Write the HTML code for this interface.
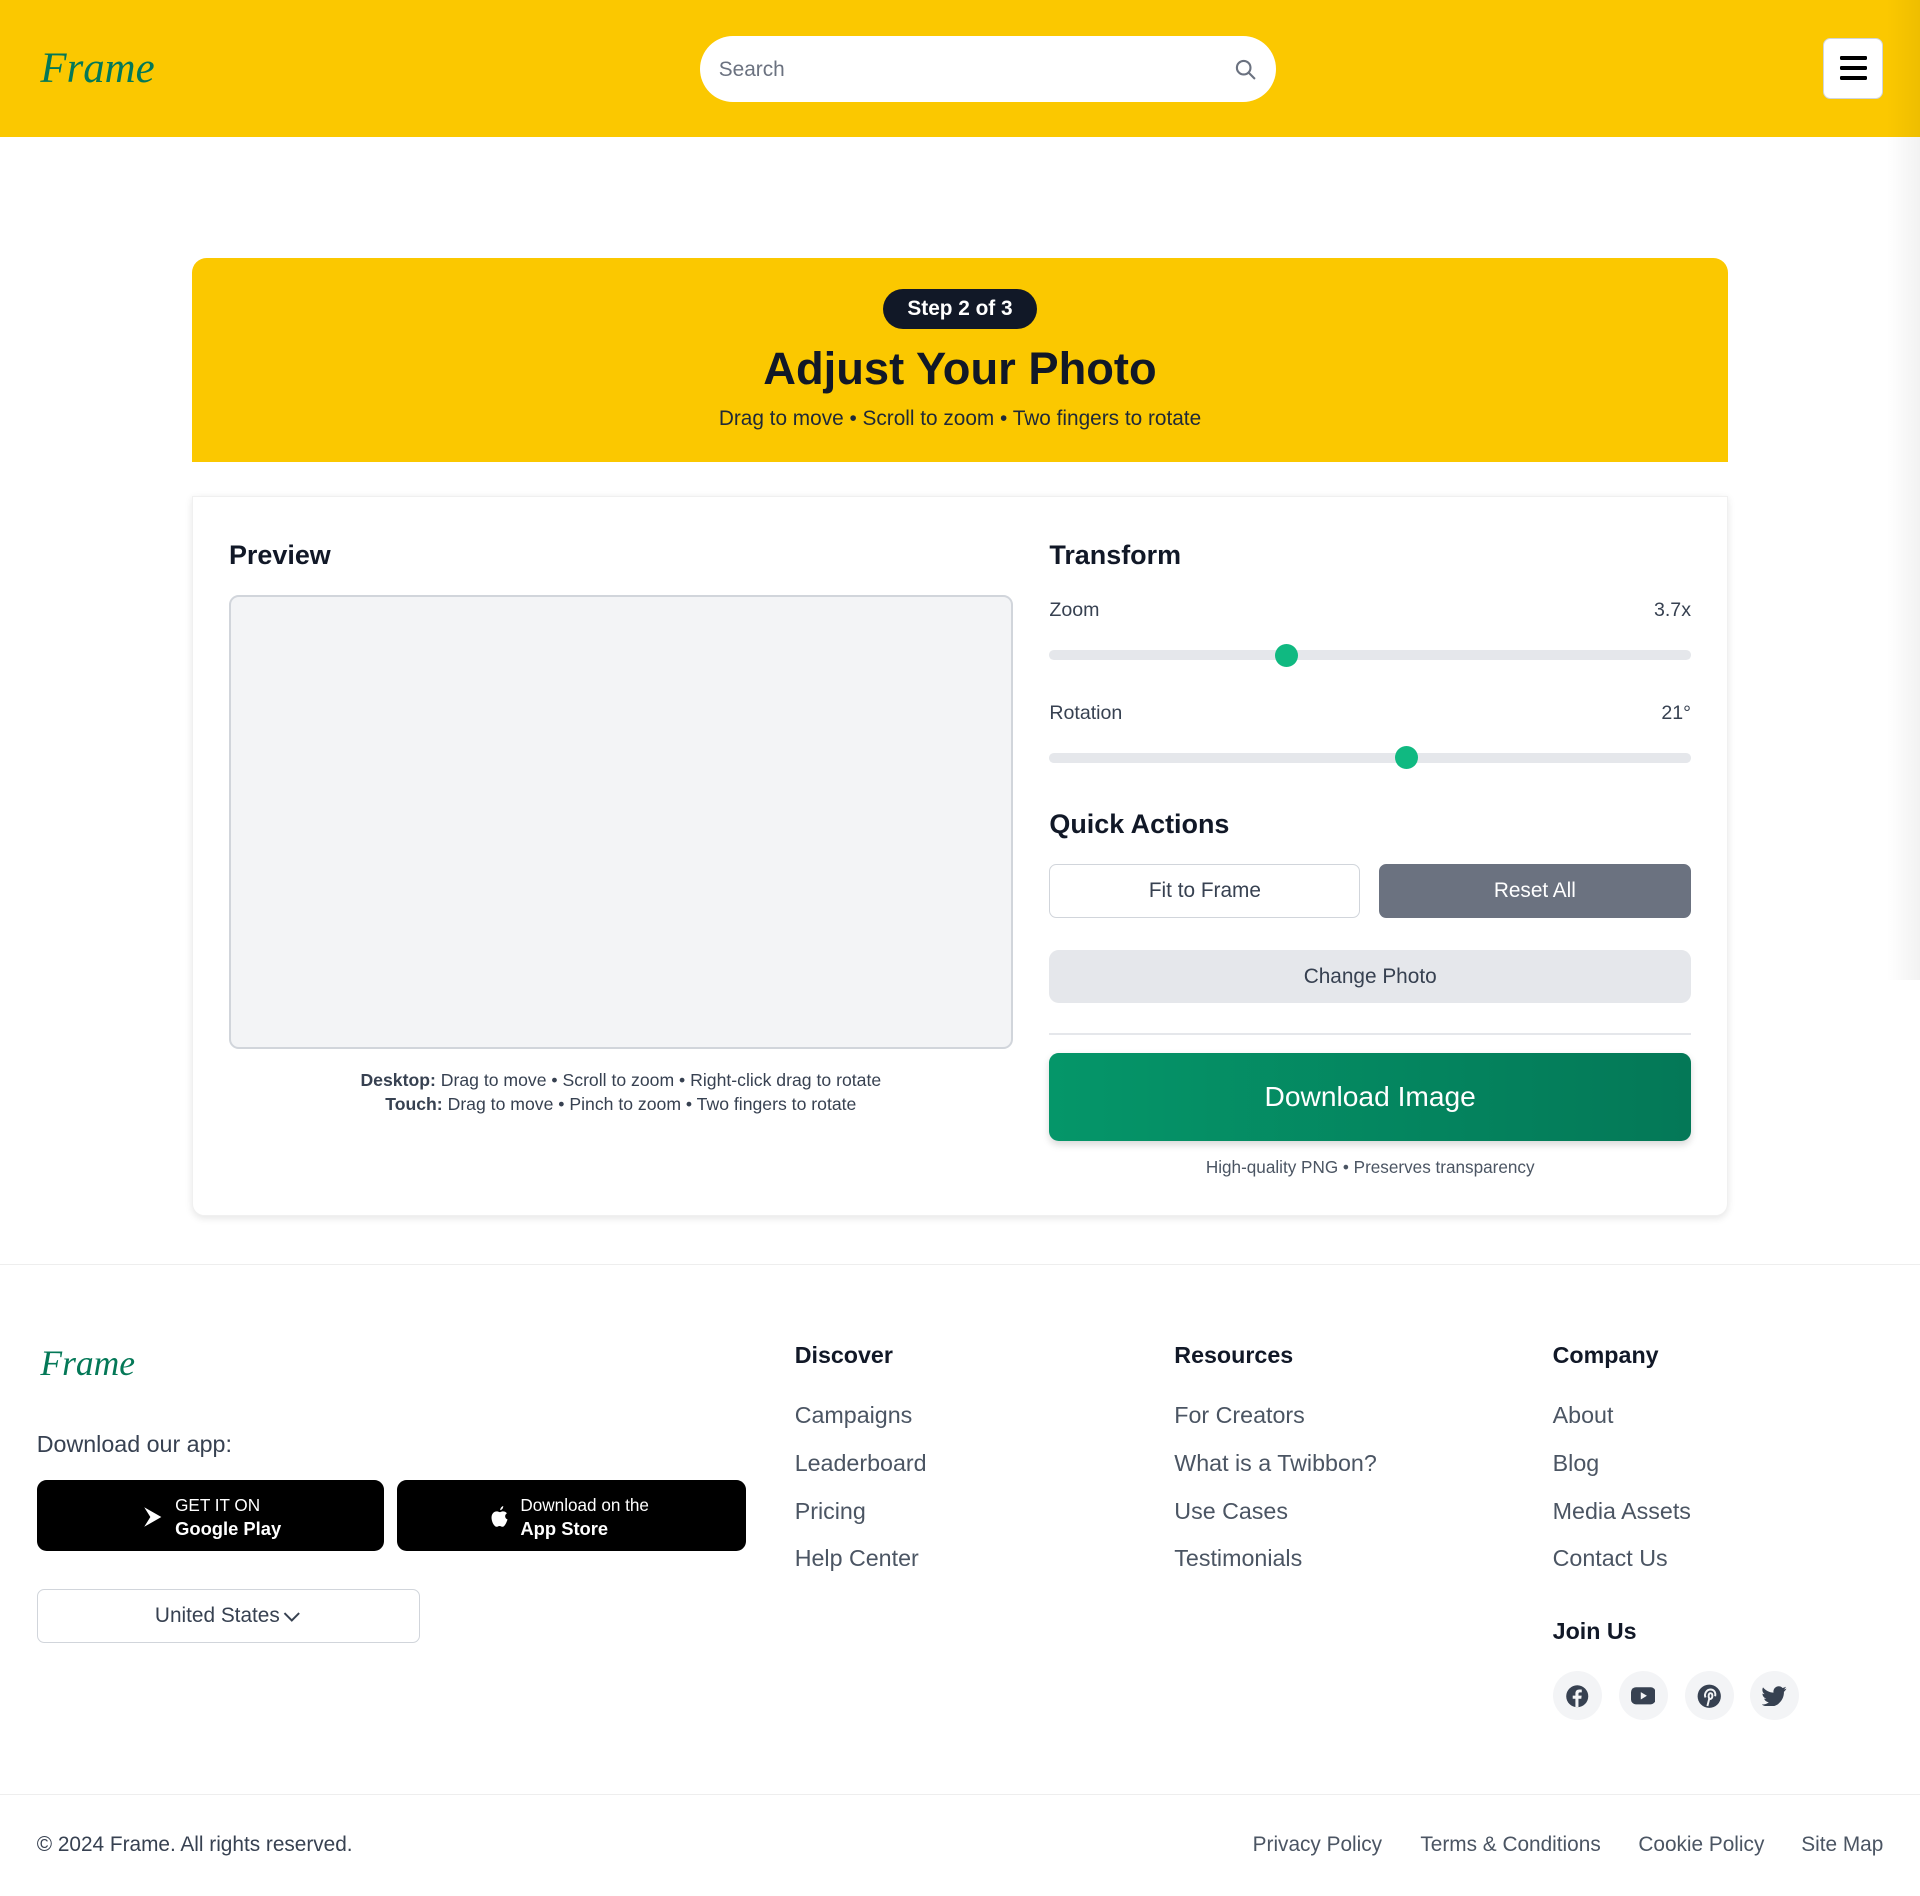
<!DOCTYPE html>
<html><head><meta charset="utf-8">
<style>
html{zoom:1.22449}
*{box-sizing:border-box;margin:0;padding:0}
body{width:1568px;height:1548px;position:relative;font-family:"Liberation Sans",sans-serif;background:#fff;color:#111827;overflow:hidden}
.a{position:absolute}
.logo{font-family:"Liberation Serif",serif;font-style:italic;color:#047857;font-weight:normal;letter-spacing:0px}
.h{font-weight:bold;font-size:22px;color:#111827}
.lbl{font-size:16px;color:#374151}
.track{height:8px;background:#e5e7eb;border-radius:4px;left:857px;width:524px}
.thumb{width:19px;height:19px;border-radius:50%;background:#10b981}
.btn{display:flex;align-items:center;justify-content:center;border-radius:6px;font-size:17px}
.fh{font-weight:bold;font-size:19px;color:#111827}
.fl{font-size:19px;color:#4b5563}
.soc{width:40px;height:40px;border-radius:50%;background:#f3f4f6;display:flex;align-items:center;justify-content:center}
.bl{font-size:17px;color:#4b5563;top:1496px}
</style></head><body>
<div class="a" style="left:0;top:0;width:1568px;height:112px;background:#fbc800"></div>
<div class="a" style="left:1540px;top:0;width:28px;height:800px;background:linear-gradient(to right,rgba(0,0,0,0),rgba(0,0,0,0.05))"></div>
<div class="a logo" style="left:33px;top:36px;font-size:35px">Frame</div>
<div class="a" style="left:572px;top:29px;width:470px;height:54px;background:#fff;border-radius:27px"></div>
<div class="a" style="left:587px;top:47px;font-size:17px;color:#6b7280">Search</div>
<svg class="a" style="left:1008px;top:47px" width="19" height="19" viewBox="0 0 24 24" fill="none" stroke="#6b7280" stroke-width="2.2" stroke-linecap="round"><circle cx="10" cy="10" r="7"/><path d="M15.5 15.5L21 21"/></svg>
<div class="a" style="left:1489px;top:31px;width:49px;height:50px;background:#fff;border-radius:6px;border:1px solid #d1d5db"></div>
<div class="a" style="left:1503px;top:46px;width:22px;height:3px;background:#000;border-radius:1px"></div>
<div class="a" style="left:1503px;top:54px;width:22px;height:3px;background:#000;border-radius:1px"></div>
<div class="a" style="left:1503px;top:62px;width:22px;height:3px;background:#000;border-radius:1px"></div>

<div class="a" style="left:157px;top:211px;width:1254px;height:166px;background:#fbc800;border-radius:12px 12px 0 0"></div>
<div class="a" style="left:721px;top:236px;width:126px;height:33px;background:#111827;border-radius:17px;color:#fff;font-weight:bold;font-size:17px;display:flex;align-items:center;justify-content:center">Step 2 of 3</div>
<div class="a" style="left:157px;top:280px;width:1254px;text-align:center;font-weight:bold;font-size:37px;color:#111827">Adjust Your Photo</div>
<div class="a" style="left:157px;top:332px;width:1254px;text-align:center;font-size:17px;color:#1f2937">Drag to move • Scroll to zoom • Two fingers to rotate</div>

<div class="a" style="left:157px;top:405px;width:1254px;height:588px;background:#fff;border:1px solid #f0f0f0;border-radius:0 0 10px 10px;box-shadow:0 2px 6px rgba(0,0,0,0.1)"></div>
<div class="a h" style="left:187px;top:441px">Preview</div>
<div class="a" style="left:187px;top:486px;width:640px;height:371px;background:#f3f4f6;border:2px solid #d1d5db;border-radius:8px"></div>
<div class="a" style="left:187px;top:873px;width:640px;text-align:center;font-size:14.4px;color:#374151;line-height:19.5px"><b>Desktop:</b> Drag to move • Scroll to zoom • Right-click drag to rotate<br><b>Touch:</b> Drag to move • Pinch to zoom • Two fingers to rotate</div>

<div class="a h" style="left:857px;top:441px">Transform</div>
<div class="a lbl" style="left:857px;top:489px">Zoom</div>
<div class="a lbl" style="left:1300px;top:489px;width:81px;text-align:right">3.7x</div>
<div class="a track" style="top:531px"></div>
<div class="a thumb" style="left:1041px;top:526px"></div>
<div class="a lbl" style="left:857px;top:573px">Rotation</div>
<div class="a lbl" style="left:1300px;top:573px;width:81px;text-align:right">21°</div>
<div class="a track" style="top:615px"></div>
<div class="a thumb" style="left:1139px;top:609px"></div>
<div class="a h" style="left:857px;top:661px">Quick Actions</div>
<div class="a btn" style="left:857px;top:706px;width:254px;height:44px;border:1px solid #d1d5db;color:#374151">Fit to Frame</div>
<div class="a btn" style="left:1126px;top:706px;width:255px;height:44px;background:#6b7280;color:#fff">Reset All</div>
<div class="a btn" style="left:857px;top:776px;width:524px;height:43px;background:#e5e7eb;color:#374151;border-radius:8px">Change Photo</div>
<div class="a" style="left:857px;top:844px;width:524px;height:1px;background:#e5e7eb"></div>
<div class="a btn" style="left:857px;top:860px;width:524px;height:72px;background:linear-gradient(to right,#059669,#047857);color:#fff;font-size:23px;border-radius:8px;box-shadow:0 3px 6px rgba(0,0,0,0.15)">Download Image</div>
<div class="a" style="left:857px;top:945px;width:524px;text-align:center;font-size:14px;color:#4b5563">High-quality PNG • Preserves transparency</div>

<div class="a" style="left:0;top:1032px;width:1568px;height:1px;background:#eeeeee"></div>
<div class="a logo" style="left:33px;top:1096px;font-size:29px">Frame</div>
<div class="a" style="left:30px;top:1169px;font-size:19px;color:#374151">Download our app:</div>
<div class="a" style="left:30px;top:1209px;width:284px;height:58px;background:#000;border-radius:8px"></div>
<svg class="a" style="left:117px;top:1230px" width="16" height="18" viewBox="0 0 16 18"><path d="M1 1L15 9L1 17L6 9Z" fill="#fff"/></svg>
<div class="a" style="left:143px;top:1219px;color:#fff;font-size:14px;line-height:20px">GET IT ON<br><b style="font-size:15px">Google Play</b></div>
<div class="a" style="left:324px;top:1209px;width:285px;height:58px;background:#000;border-radius:8px"></div>
<svg class="a" style="left:401px;top:1230px" width="15" height="18" viewBox="0 0 15 18"><path d="M10 0C10 2 9 3 7.5 3.5C7.5 2 8.5 0.5 10 0ZM7.5 5C9 4 12 4 13 6C11 7 11 10 13.5 11C12.5 14 11 17 9.5 17C8.5 17 8 16.3 7 16.3C6 16.3 5.5 17 4.5 17C2.5 17 0 12 0.5 8.5C1 5 4 4 5.5 4.5C6.5 4.8 7 5 7.5 5Z" fill="#fff"/></svg>
<div class="a" style="left:425px;top:1219px;color:#fff;font-size:14px;line-height:20px">Download on the<br><b style="font-size:15px">App Store</b></div>
<div class="a btn" style="left:30px;top:1298px;width:313px;height:44px;border:1px solid #d1d5db;color:#374151">United States<svg width="16" height="16" viewBox="0 0 16 16" style="margin-left:2px"><path d="M2 5L8 11L14 5" stroke="#374151" stroke-width="1.6" fill="none"/></svg></div>

<div class="a fh" style="left:649px;top:1096px">Discover</div>
<div class="a fl" style="left:649px;top:1145px">Campaigns</div>
<div class="a fl" style="left:649px;top:1184px">Leaderboard</div>
<div class="a fl" style="left:649px;top:1223px">Pricing</div>
<div class="a fl" style="left:649px;top:1262px">Help Center</div>
<div class="a fh" style="left:959px;top:1096px">Resources</div>
<div class="a fl" style="left:959px;top:1145px">For Creators</div>
<div class="a fl" style="left:959px;top:1184px">What is a Twibbon?</div>
<div class="a fl" style="left:959px;top:1223px">Use Cases</div>
<div class="a fl" style="left:959px;top:1262px">Testimonials</div>
<div class="a fh" style="left:1268px;top:1096px">Company</div>
<div class="a fl" style="left:1268px;top:1145px">About</div>
<div class="a fl" style="left:1268px;top:1184px">Blog</div>
<div class="a fl" style="left:1268px;top:1223px">Media Assets</div>
<div class="a fl" style="left:1268px;top:1262px">Contact Us</div>
<div class="a fh" style="left:1268px;top:1321px">Join Us</div>
<div class="a soc" style="left:1268px;top:1365px"><svg width="20" height="20" viewBox="0 0 20 20"><circle cx="10" cy="10" r="9" fill="#374151"/><path d="M11 19V12H13.3L13.6 9.5H11V8C11 7.3 11.3 6.8 12.3 6.8H13.7V4.6C13.3 4.5 12.5 4.5 11.7 4.5C9.8 4.5 8.5 5.6 8.5 7.7V9.5H6.3V12H8.5V19Z" fill="#f3f4f6"/></svg></div>
<div class="a soc" style="left:1322px;top:1365px"><svg width="20" height="16" viewBox="0 0 20 16"><rect x="0" y="1" width="20" height="14" rx="4" fill="#374151"/><path d="M8 5L13 8L8 11Z" fill="#f3f4f6"/></svg></div>
<div class="a soc" style="left:1376px;top:1365px"><svg width="20" height="20" viewBox="0 0 20 20"><circle cx="10" cy="10" r="9.5" fill="#374151"/><path d="M8.5 18L10 12M10 12C9 10 9.5 7.5 11 7.5C13 7.5 13 11 11.5 12C10.5 12.7 10 12 10 12ZM7 11C5.5 8 8 4.5 11 4.5C14 4.5 15.5 7 14.8 10" stroke="#f3f4f6" stroke-width="1.6" fill="none"/></svg></div>
<div class="a soc" style="left:1429px;top:1365px"><svg width="20" height="17" viewBox="0 0 24 20"><path d="M24 2.4C23 2.8 22.2 3 21.2 3.2C22.2 2.6 23 1.6 23.4 0.5C22.4 1.1 21.3 1.5 20.2 1.7C18.2 -0.4 14.9 -0.5 12.8 1.5C11.5 2.7 10.9 4.6 11.3 6.3C7.3 6.1 3.5 4.2 1 1.1C-0.3 3.4 0.4 6.3 2.6 7.8C1.8 7.8 1 7.6 0.4 7.2C0.4 9.6 2 11.6 4.3 12.1C3.6 12.3 2.8 12.3 2.1 12.2C2.7 14.2 4.6 15.6 6.7 15.700C4.6 17.4 2 18.2 -0.5 17.9C2 19.4 4.6 20.1 7.5 20.1C16.6 20.1 21.5 12.6 21.5 6.1V5.5C22.5 4.6 23.3 3.6 24 2.4Z" fill="#374151"/></svg></div>

<div class="a" style="left:0;top:1465px;width:1568px;height:1px;background:#eeeeee"></div>
<div class="a" style="left:30px;top:1497px;font-size:17px;color:#374151">© 2024 Frame. All rights reserved.</div>
<div class="a bl" style="left:1023px;top:1497px">Privacy Policy</div>
<div class="a bl" style="left:1160px;top:1497px">Terms &amp; Conditions</div>
<div class="a bl" style="left:1338px;top:1497px">Cookie Policy</div>
<div class="a bl" style="left:1471px;top:1497px">Site Map</div>
</body></html>
